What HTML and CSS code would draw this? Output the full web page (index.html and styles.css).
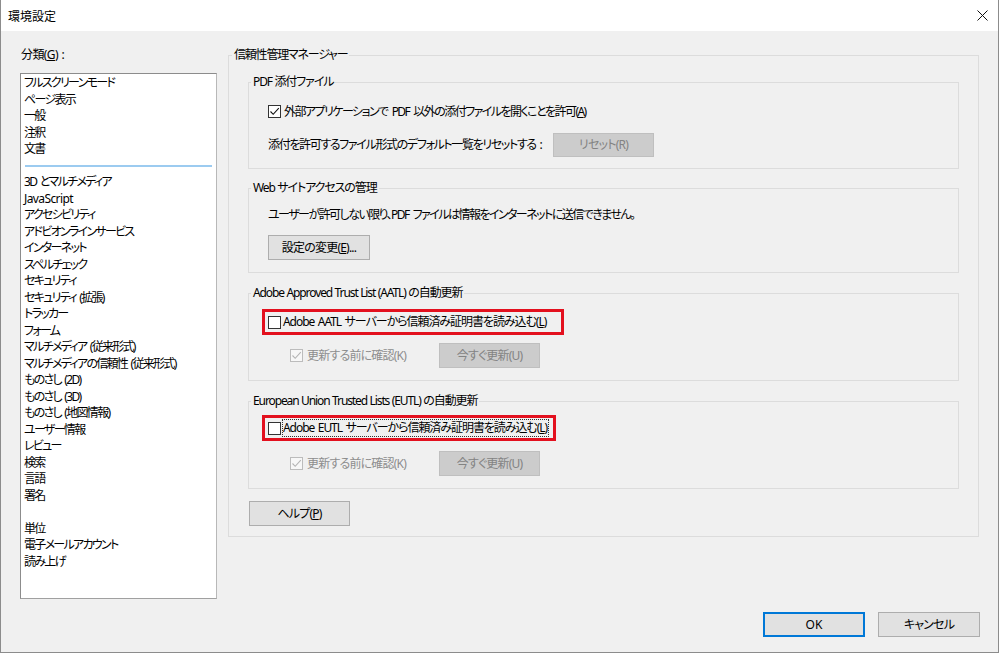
FILE: index.html
```html
<!DOCTYPE html>
<html lang="ja">
<head>
<meta charset="utf-8">
<title>環境設定</title>
<link rel="stylesheet" href="styles.css">
</head>
<body>
<div class="window">
  <div class="titlebar">
    <span class="title">環境設定</span>
    <svg class="close" width="11" height="11" viewBox="0 0 11 11"><path d="M0.5 0.5 L10.5 10.5 M10.5 0.5 L0.5 10.5" stroke="#111" stroke-width="1" fill="none"/></svg>
  </div>
  <div class="main">
    <div class="panes">
      <div class="left">
        <div class="cat-label">分類(<u>G</u>)&nbsp;:</div>
        <ul class="list">
          <li>フルスクリーンモード</li>
          <li>ページ表示</li>
          <li>一般</li>
          <li>注釈</li>
          <li>文書</li>
          <li class="sep"></li>
          <li>3D とマルチメディア</li>
          <li class="latin">JavaScript</li>
          <li>アクセシビリティ</li>
          <li>アドビオンラインサービス</li>
          <li>インターネット</li>
          <li>スペルチェック</li>
          <li>セキュリティ</li>
          <li>セキュリティ (拡張)</li>
          <li>トラッカー</li>
          <li>フォーム</li>
          <li>マルチメディア (従来形式)</li>
          <li>マルチメディアの信頼性 (従来形式)</li>
          <li>ものさし (2D)</li>
          <li>ものさし (3D)</li>
          <li>ものさし (地図情報)</li>
          <li>ユーザー情報</li>
          <li>レビュー</li>
          <li>検索</li>
          <li>言語</li>
          <li>署名</li>
          <li class="blank"></li>
          <li>単位</li>
          <li>電子メールアカウント</li>
          <li>読み上げ</li>
        </ul>
      </div>
      <fieldset class="outer">
        <legend>信頼性管理マネージャー</legend>
        <div class="outer-body">
          <fieldset class="group g-pdf">
            <legend>PDF 添付ファイル</legend>
            <div class="gbody">
              <div class="row row-check">
                <span class="cb checked"><svg width="11" height="11" viewBox="0 0 11 11"><path d="M1.5 5.5 L4.2 8.3 L9.8 2.2" stroke="#111" stroke-width="1.1" fill="none"/></svg></span>
                <span class="cb-label">外部アプリケーションで PDF 以外の添付ファイルを開くことを許可(<u>A</u>)</span>
              </div>
              <div class="row row-reset">
                <span class="reset-text">添付を許可するファイル形式のデフォルト一覧をリセットする :</span>
                <button class="btn disabled reset">リセット(R)</button>
              </div>
            </div>
          </fieldset>

          <fieldset class="group g-web">
            <legend>Web サイトアクセスの管理</legend>
            <div class="gbody">
              <p class="info-text">ユーザーが許可しない限り、PDF ファイルは情報をインターネットに送信できません。</p>
              <button class="btn change">設定の変更(<u>E</u>)...</button>
            </div>
          </fieldset>

          <fieldset class="group g-aatl">
            <legend>Adobe Approved Trust List (AATL) の自動更新</legend>
            <div class="gbody">
              <div class="redbox rb-aatl">
                <span class="cb"></span>
                <span class="cb-label">Adobe AATL サーバーから信頼済み証明書を読み込む(<u>L</u>)</span>
              </div>
              <div class="row row-sub">
                <div class="sub-check">
                  <span class="cb disabled"><svg width="11" height="11" viewBox="0 0 11 11"><path d="M1.5 5.5 L4.2 8.3 L9.8 2.2" stroke="#b4b4b4" stroke-width="1.1" fill="none"/></svg></span>
                  <span class="sub-label">更新する前に確認(K)</span>
                </div>
                <button class="btn disabled now">今すぐ更新(U)</button>
              </div>
            </div>
          </fieldset>

          <fieldset class="group g-eutl">
            <legend>European Union Trusted Lists (EUTL) の自動更新</legend>
            <div class="gbody">
              <div class="redbox rb-eutl">
                <span class="cb"></span>
                <span class="cb-label focus">Adobe EUTL サーバーから信頼済み証明書を読み込む(<u>L</u>)</span>
              </div>
              <div class="row row-sub">
                <div class="sub-check">
                  <span class="cb disabled"><svg width="11" height="11" viewBox="0 0 11 11"><path d="M1.5 5.5 L4.2 8.3 L9.8 2.2" stroke="#b4b4b4" stroke-width="1.1" fill="none"/></svg></span>
                  <span class="sub-label">更新する前に確認(K)</span>
                </div>
                <button class="btn disabled now">今すぐ更新(U)</button>
              </div>
            </div>
          </fieldset>

          <button class="btn help">ヘルプ(<u>P</u>)</button>
        </div>
      </fieldset>
    </div>
    <div class="footer">
      <button class="btn ok">OK</button>
      <button class="btn cancel">キャンセル</button>
    </div>
  </div>
</div>
</body>
</html>
```

FILE: styles.css
```css
* { box-sizing: border-box; }

html, body {
  margin: 0;
  padding: 0;
  background: #ffffff;
}

body {
  width: 1000px;
  height: 654px;
  font-family: "Noto Sans", "Noto Sans CJK JP", sans-serif;
  font-size: 12px;
  line-height: 16px;
  letter-spacing: -1px;
  word-spacing: 1px;
  color: #000;
  font-feature-settings: "palt";
}

u { text-decoration: underline; text-underline-offset: 1px; }

.window {
  width: 999px;
  height: 653px;
  border: 1px solid #8c8c8c;
  border-top: none;
  display: flex;
  flex-direction: column;
}

.titlebar {
  height: 31px;
  background: #ffffff;
  display: flex;
  align-items: center;
  justify-content: space-between;
  padding: 2px 10px 0 7px;
  flex-shrink: 0;
}

.title { font-size: 12px; letter-spacing: 0; }

.close { display: block; margin-top: -2px; }

.main {
  flex: 1;
  background: #f0f0f0;
  padding: 16px 18px 0 19px;
  display: flex;
  flex-direction: column;
}

.panes {
  display: flex;
  align-items: flex-start;
  gap: 11px;
}

.left {
  width: 197px;
  display: flex;
  flex-direction: column;
}

.cat-label {
  padding-left: 1px;
  height: 16px;
  margin-bottom: 10px;
  letter-spacing: -0.6px;
}

.list {
  list-style: none;
  margin: 0;
  padding: 1px 3px 0 3px;
  height: 526px;
  background: #fff;
  border: 1px solid #8c8c8c;
  border-right-color: #b8b8b8;
  border-bottom-color: #a0a0a0;
  line-height: 16.5px;
  white-space: nowrap;
  letter-spacing: -1.7px;
  word-spacing: 2px;
}

.list li { height: 16.5px; }
.list li.latin { letter-spacing: -0.6px; }

.list li.sep {
  display: flex;
  align-items: center;
  padding: 0 1px;
}

.list li.sep::after {
  content: "";
  display: block;
  width: 100%;
  height: 2px;
  background: #9ccbf0;
}

/* fieldsets */
fieldset {
  margin: 0;
  padding: 0;
  min-width: 0;
  border: 1px solid #dcdcdc;
}

legend {
  padding: 0 2px;
  line-height: 16px;
  white-space: nowrap;
}

.outer {
  width: 751px;
}

.outer > legend { margin-left: 3px; letter-spacing: -1.2px; }

.outer-body {
  padding: 11px 19px 10px 19px;
  display: flex;
  flex-direction: column;
}

.group > legend { margin-left: 2px; letter-spacing: -1.1px; word-spacing: 0.5px; }

.group + .group { margin-top: 11px; }
.g-aatl, .g-eutl { margin-top: 12px !important; }

.gbody {
  padding-left: 19px;
  display: flex;
  flex-direction: column;
  align-items: flex-start;
}

.g-pdf .gbody { padding-top: 11px; padding-bottom: 11px; }
.g-web .gbody { padding-top: 11px; padding-bottom: 12px; }
.g-aatl .gbody { padding-top: 8px; padding-bottom: 12px; }
.g-eutl .gbody { padding-top: 6px; padding-bottom: 12px; }

.row {
  display: flex;
  align-items: center;
  white-space: nowrap;
}

.row-check { height: 21px; }
.row-check .cb-label { margin-left: 3px; letter-spacing: -1.55px; word-spacing: 2.5px; }

.row-reset {
  margin-top: 11px;
  height: 24px;
}

.reset-text { width: 285px; flex-shrink: 0; letter-spacing: -1.35px; word-spacing: 2px; }

.info-text {
  margin: 0;
  height: 16px;
  white-space: nowrap;
  letter-spacing: -1.55px;
  word-spacing: 2.5px;
}

.g-web .change { margin-top: 12px; }

/* checkboxes */
.cb {
  width: 13px;
  height: 13px;
  border: 1px solid #333;
  background: #fff;
  display: inline-flex;
  align-items: center;
  justify-content: center;
  flex-shrink: 0;
}

.cb svg { display: block; }

.cb.disabled {
  border-color: #bcbcbc;
  background: #f7f7f7;
}

.redbox {
  display: flex;
  align-items: center;
  height: 26px;
  border: 3px solid #e3101e;
  margin-left: -6px;
  padding-left: 3px;
  white-space: nowrap;
}

.rb-aatl { width: 302px; }
.rb-eutl { width: 294px; }

.redbox .cb-label { margin-left: 2px; letter-spacing: -1.05px; word-spacing: 1.5px; }

.cb-label.focus {
  outline: 1px dotted #333;
  outline-offset: 0;
  padding-right: 1px;
}

.row-sub {
  height: 25px;
  margin-left: 22px;
}

.g-aatl .row-sub { margin-top: 8px; }
.g-eutl .row-sub { margin-top: 10px; }

.sub-check {
  width: 149px;
  display: flex;
  align-items: center;
}

.sub-label {
  margin-left: 4px;
  color: #8d8d8d;
  letter-spacing: -0.8px;
}

/* buttons */
.btn {
  font-family: inherit;
  font-size: 12px;
  line-height: 16px;
  letter-spacing: -0.8px;
  color: #000;
  background: #e1e1e1;
  border: 1px solid #adadad;
  padding: 0;
  margin: 0;
  width: 101px;
  height: 25px;
  display: inline-flex;
  align-items: center;
  justify-content: center;
  white-space: nowrap;
  font-feature-settings: "palt";
}

.btn.disabled {
  background: #cccccc;
  border-color: #bfbfbf;
  color: #838383;
}

.reset { height: 24px; }

.change { width: 102px; height: 25px; }

.help {
  margin-top: 12px;
  margin-left: 1px;
  width: 101px;
}

.footer {
  display: flex;
  justify-content: flex-end;
  gap: 13px;
  margin-top: 13px;
}

.ok {
  border: 1px solid #0078d7;
  box-shadow: inset 0 0 0 1px #0078d7;
  width: 102px;
  letter-spacing: 0;
}

.cancel { width: 102px; }
```
